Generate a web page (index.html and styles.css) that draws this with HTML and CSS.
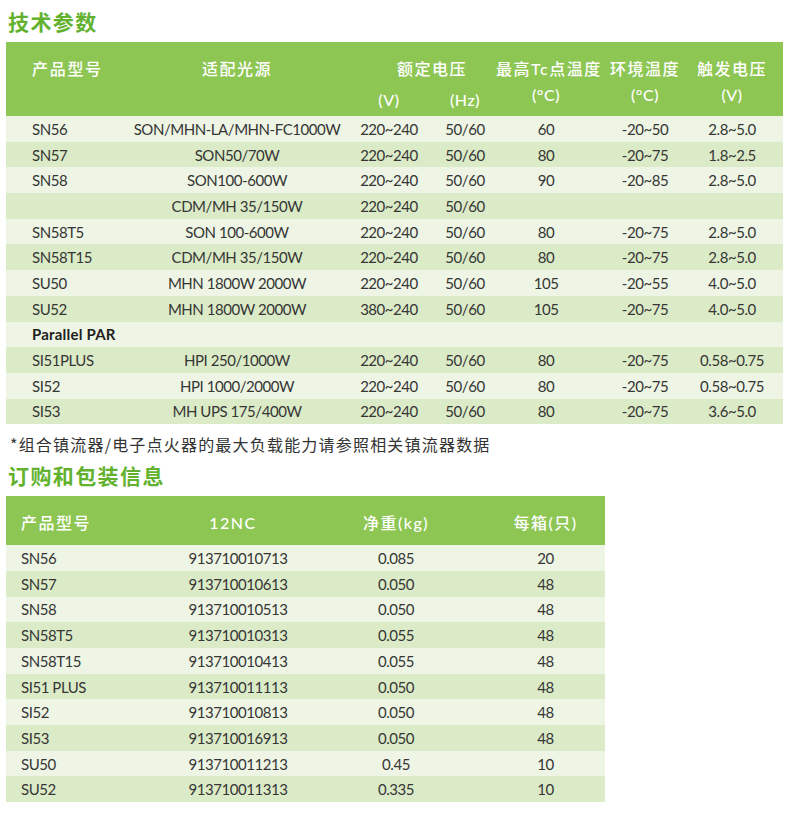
FILE: index.html
```html
<!DOCTYPE html>
<html lang="zh-CN">
<head>
<meta charset="utf-8">
<title>技术参数</title>
<link rel="stylesheet" href="styles.css">
</head>
<body>
<div class="page">
  <h2 class="title title-first">技术参数</h2>
  <table class="spec">
    <colgroup>
      <col class="c1"><col class="c2"><col class="c3"><col class="c4"><col class="c5"><col class="c6"><col class="c7">
    </colgroup>
    <thead>
      <tr class="h1">
        <th class="left">产品型号</th>
        <th>适配光源</th>
        <th colspan="2" class="volt">额定电压</th>
        <th>最高Tc点温度</th>
        <th>环境温度</th>
        <th class="last">触发电压</th>
      </tr>
      <tr class="h2">
        <th></th>
        <th></th>
        <th class="unit-low">(V)</th>
        <th class="unit-low">(Hz)</th>
        <th>(°C)</th>
        <th>(°C)</th>
        <th class="last">(V)</th>
      </tr>
    </thead>
    <tbody>
      <tr><td class="left">SN56</td><td>SON/MHN-LA/MHN-FC1000W</td><td>220~240</td><td>50/60</td><td>60</td><td>-20~50</td><td class="last">2.8~5.0</td></tr>
      <tr><td class="left">SN57</td><td>SON50/70W</td><td>220~240</td><td>50/60</td><td>80</td><td>-20~75</td><td class="last">1.8~2.5</td></tr>
      <tr><td class="left">SN58</td><td>SON100-600W</td><td>220~240</td><td>50/60</td><td>90</td><td>-20~85</td><td class="last">2.8~5.0</td></tr>
      <tr><td class="left"></td><td>CDM/MH 35/150W</td><td>220~240</td><td>50/60</td><td></td><td></td><td class="last"></td></tr>
      <tr><td class="left">SN58T5</td><td>SON 100-600W</td><td>220~240</td><td>50/60</td><td>80</td><td>-20~75</td><td class="last">2.8~5.0</td></tr>
      <tr><td class="left">SN58T15</td><td>CDM/MH 35/150W</td><td>220~240</td><td>50/60</td><td>80</td><td>-20~75</td><td class="last">2.8~5.0</td></tr>
      <tr><td class="left">SU50</td><td>MHN 1800W 2000W</td><td>220~240</td><td>50/60</td><td>105</td><td>-20~55</td><td class="last">4.0~5.0</td></tr>
      <tr><td class="left">SU52</td><td>MHN 1800W 2000W</td><td>380~240</td><td>50/60</td><td>105</td><td>-20~75</td><td class="last">4.0~5.0</td></tr>
      <tr><td class="left group" colspan="2">Parallel PAR</td><td></td><td></td><td></td><td></td><td class="last"></td></tr>
      <tr><td class="left">SI51PLUS</td><td>HPI 250/1000W</td><td>220~240</td><td>50/60</td><td>80</td><td>-20~75</td><td class="last">0.58~0.75</td></tr>
      <tr><td class="left">SI52</td><td>HPI 1000/2000W</td><td>220~240</td><td>50/60</td><td>80</td><td>-20~75</td><td class="last">0.58~0.75</td></tr>
      <tr><td class="left">SI53</td><td>MH UPS 175/400W</td><td>220~240</td><td>50/60</td><td>80</td><td>-20~75</td><td class="last">3.6~5.0</td></tr>
    </tbody>
  </table>
  <p class="note">*组合镇流器/电子点火器的最大负载能力请参照相关镇流器数据</p>

  <h2 class="title title-second">订购和包装信息</h2>
  <table class="order">
    <colgroup>
      <col class="o1"><col class="o2"><col class="o3"><col class="o4">
    </colgroup>
    <thead>
      <tr>
        <th class="left">产品型号</th>
        <th class="nc">12NC</th>
        <th>净重(kg)</th>
        <th>每箱(只)</th>
      </tr>
    </thead>
    <tbody>
      <tr><td class="left">SN56</td><td>913710010713</td><td>0.085</td><td>20</td></tr>
      <tr><td class="left">SN57</td><td>913710010613</td><td>0.050</td><td>48</td></tr>
      <tr><td class="left">SN58</td><td>913710010513</td><td>0.050</td><td>48</td></tr>
      <tr><td class="left">SN58T5</td><td>913710010313</td><td>0.055</td><td>48</td></tr>
      <tr><td class="left">SN58T15</td><td>913710010413</td><td>0.055</td><td>48</td></tr>
      <tr><td class="left">SI51 PLUS</td><td>913710011113</td><td>0.050</td><td>48</td></tr>
      <tr><td class="left">SI52</td><td>913710010813</td><td>0.050</td><td>48</td></tr>
      <tr><td class="left">SI53</td><td>913710016913</td><td>0.050</td><td>48</td></tr>
      <tr><td class="left">SU50</td><td>913710011213</td><td>0.45</td><td>10</td></tr>
      <tr><td class="left">SU52</td><td>913710011313</td><td>0.335</td><td>10</td></tr>
    </tbody>
  </table>
</div>
</body>
</html>
```
FILE: styles.css
```css
html, body {
  margin: 0;
  padding: 0;
  background: #ffffff;
}

body {
  font-family: "Lato", "Noto Sans CJK SC", sans-serif;
  color: #333333;
}

.page {
  padding: 0 6px;
}

.title {
  margin: 6px 0 0 2px;
  font-family: "Noto Sans CJK SC", sans-serif;
  font-size: 21px;
  line-height: 30px;
  font-weight: 700;
  letter-spacing: 1.4px;
  color: #62b22f;
}

.title-second {
  margin-top: 4px;
}

table {
  border-collapse: collapse;
  border-spacing: 0;
  table-layout: fixed;
}

th {
  font-family: "Lato", "Noto Sans CJK SC", sans-serif;
  font-weight: 500;
  font-size: 16px;
  letter-spacing: 1.5px;
  color: #ffffff;
  text-align: center;
  background: #8dc653;
  padding: 0;
  white-space: nowrap;
}

td {
  font-size: 15px;
  line-height: 20px;
  height: 25.7px;
  padding: 0;
  text-align: center;
  white-space: nowrap;
  letter-spacing: -0.45px;
  color: #363636;
}

tbody tr:nth-child(odd) td {
  background: #eef5e4;
}

tbody tr:nth-child(even) td {
  background: #dcebc7;
}

/* Spec table */
.spec {
  width: 777px;
  margin-top: 6px;
}

.spec .c1 { width: 124px; }
.spec .c2 { width: 214px; }
.spec .c3 { width: 90px; }
.spec .c4 { width: 62px; }
.spec .c5 { width: 100px; }
.spec .c6 { width: 98px; }
.spec .c7 { width: 89px; }

.spec .left {
  text-align: left;
  padding-left: 26px;
}

.spec .last {
  padding-right: 13px;
}

.spec .h1 th {
  padding-top: 16px;
  padding-bottom: 4px;
  line-height: 22px;
  vertical-align: top;
}

.spec .h1 th.left {
  letter-spacing: 1.7px;
}

.spec .volt {
  padding-left: 24px;
}

.spec .h2 th {
  line-height: 20px;
  vertical-align: top;
  padding-top: 1px;
  letter-spacing: 0.5px;
}

.spec .h2 th.unit-low {
  padding-top: 6px;
  padding-bottom: 6px;
}

.spec .group {
  font-weight: 700;
  color: #1e1e1e;
  letter-spacing: 0.2px;
}

.note {
  margin: 8px 0 0 4px;
  font-family: "Noto Sans CJK SC", sans-serif;
  font-size: 16px;
  line-height: 24px;
  letter-spacing: 1.2px;
  color: #333333;
}

/* Order table */
.order {
  width: 599px;
  margin-top: 6px;
}

.order .o1 { width: 164px; }
.order .o2 { width: 136px; }
.order .o3 { width: 180px; }
.order .o4 { width: 119px; }

.order th {
  height: 49px;
  padding-top: 16px;
  padding-bottom: 11px;
  line-height: 22px;
  box-sizing: border-box;
  vertical-align: top;
}

.order .left {
  text-align: left;
  padding-left: 15px;
}

.order th.nc {
  padding-right: 10px;
}
```
